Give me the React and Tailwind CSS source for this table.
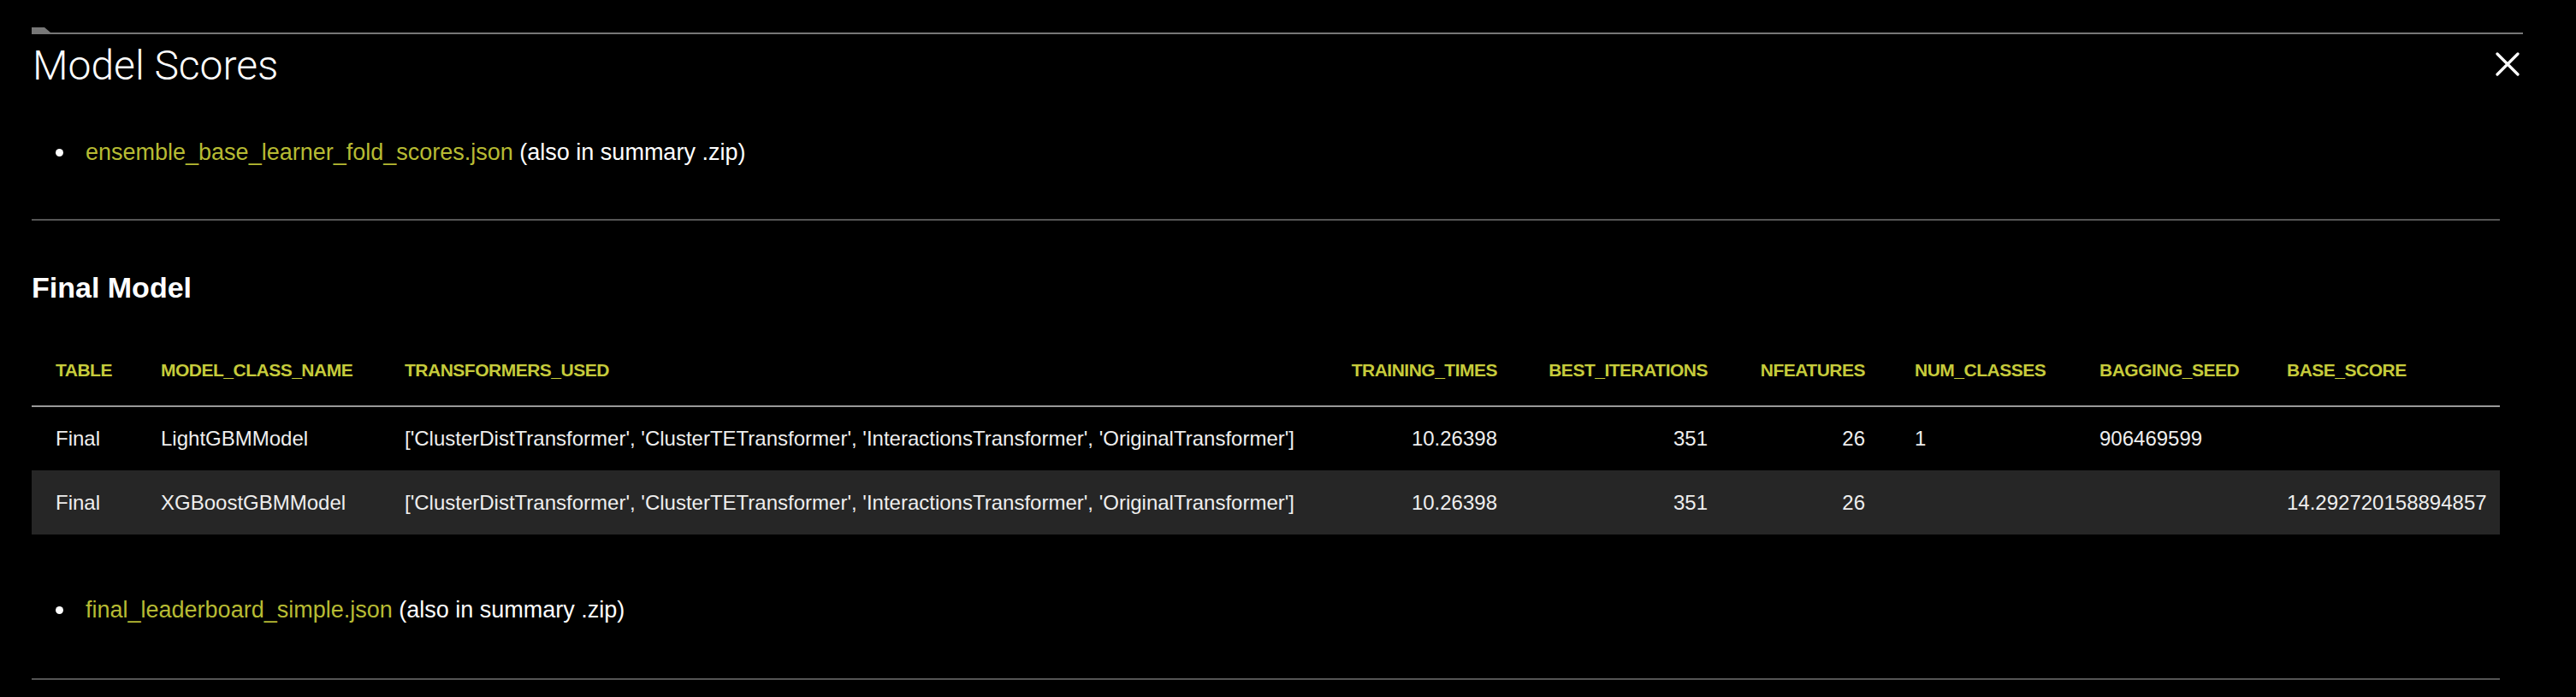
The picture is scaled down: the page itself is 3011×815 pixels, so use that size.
import React from "react";

const columns = [
  { key: "table", label: "TABLE", width: "w-[122px]", first: true },
  { key: "model", label: "MODEL_CLASS_NAME", width: "w-[285px]" },
  { key: "transformers", label: "TRANSFORMERS_USED", width: "w-[1102px]" },
  { key: "times", label: "TRAINING_TIMES", width: "w-[233px]", right: true },
  { key: "iters", label: "BEST_ITERATIONS", width: "w-[246px]", right: true },
  { key: "nfeat", label: "NFEATURES", width: "w-[184px]", right: true },
  { key: "classes", label: "NUM_CLASSES", width: "w-[216px]" },
  { key: "seed", label: "BAGGING_SEED", width: "w-[219px]" },
  { key: "score", label: "BASE_SCORE", width: "w-[278px]" },
];

const transformers =
  "['ClusterDistTransformer', 'ClusterTETransformer', 'InteractionsTransformer', 'OriginalTransformer']";

const rows = [
  {
    table: "Final",
    model: "LightGBMModel",
    transformers,
    times: "10.26398",
    iters: "351",
    nfeat: "26",
    classes: "1",
    seed: "906469599",
    score: "",
  },
  {
    table: "Final",
    model: "XGBoostGBMModel",
    transformers,
    times: "10.26398",
    iters: "351",
    nfeat: "26",
    classes: "",
    seed: "",
    score: "14.292720158894857",
  },
];

function FileItem({ name }) {
  return (
    <ul className="flex items-center h-[40px] text-[27px] leading-[40px]">
      <li className="flex items-center">
        <span className="ml-[28px] mr-[26px] w-[9px] h-[9px] rounded-full bg-white" />
        <a className="text-[#b7bb33]">{name}</a>
        <span className="text-white">&nbsp;(also in summary .zip)</span>
      </li>
    </ul>
  );
}

export default function App() {
  return (
    <div className="min-h-screen bg-black text-white font-['Liberation_Sans',Arial,sans-serif]">
      <div className="pl-[37px] pr-[62px] pt-[32px]">
        {/* tab rule */}
        <div className="flex items-end h-[8px]">
          <svg width="22" height="8" viewBox="0 0 22 8" className="shrink-0 block">
            <polygon points="0,0 15,0 22,6 22,8 0,8" fill="#777" />
          </svg>
          <div className="flex-1 h-[2px] bg-[#777]" />
        </div>

        <div className="flex justify-between items-start mt-[13px]">
          <h2 className="text-[48px] leading-[48px] font-light font-['Roboto','Liberation_Sans',sans-serif] ml-[1px]">
            Model Scores
          </h2>
          <button className="mt-[8px] mr-[4px]">
            <svg width="28" height="28" viewBox="0 0 28 28" className="block">
              <path d="M2 2 L26 26 M26 2 L2 26" stroke="white" strokeWidth="3.2" strokeLinecap="round" />
            </svg>
          </button>
        </div>

        <div className="pr-[27px]">
          <div className="mt-[57px]">
            <FileItem name="ensemble_base_learner_fold_scores.json" />
          </div>

          <div className="mt-[58px] h-[2px] bg-[#555]" />

          <h3 className="mt-[61px] text-[34px] leading-[34px] font-bold">Final Model</h3>

          <table className="mt-[38px] w-full table-fixed border-collapse">
            <thead>
              <tr className="h-[84px] border-b-2 border-[#999]">
                {columns.map((c) => (
                  <th
                    key={c.key}
                    className={`${c.width} ${c.first ? "pl-[28px]" : "pl-[29px]"} pr-[29px] ${
                      c.right ? "text-right" : "text-left"
                    } text-[21px] tracking-[-0.5px] font-bold text-[#c6cb3b] whitespace-nowrap`}
                  >
                    {c.label}
                  </th>
                ))}
              </tr>
            </thead>
            <tbody>
              {rows.map((r, i) => (
                <tr key={i} className={`h-[75px] ${i % 2 === 1 ? "bg-[#262626]" : ""}`}>
                  {columns.map((c) => (
                    <td
                      key={c.key}
                      className={`${c.first ? "pl-[28px]" : "pl-[29px]"} pr-[29px] ${
                        c.right ? "text-right" : "text-left"
                      } text-[24px] text-[#eeeeee] whitespace-nowrap`}
                    >
                      {r[c.key]}
                    </td>
                  ))}
                </tr>
              ))}
            </tbody>
          </table>

          <div className="mt-[68px]">
            <FileItem name="final_leaderboard_simple.json" />
          </div>

          <div className="mt-[60px] h-[2px] bg-[#555]" />
        </div>
      </div>
    </div>
  );
}
